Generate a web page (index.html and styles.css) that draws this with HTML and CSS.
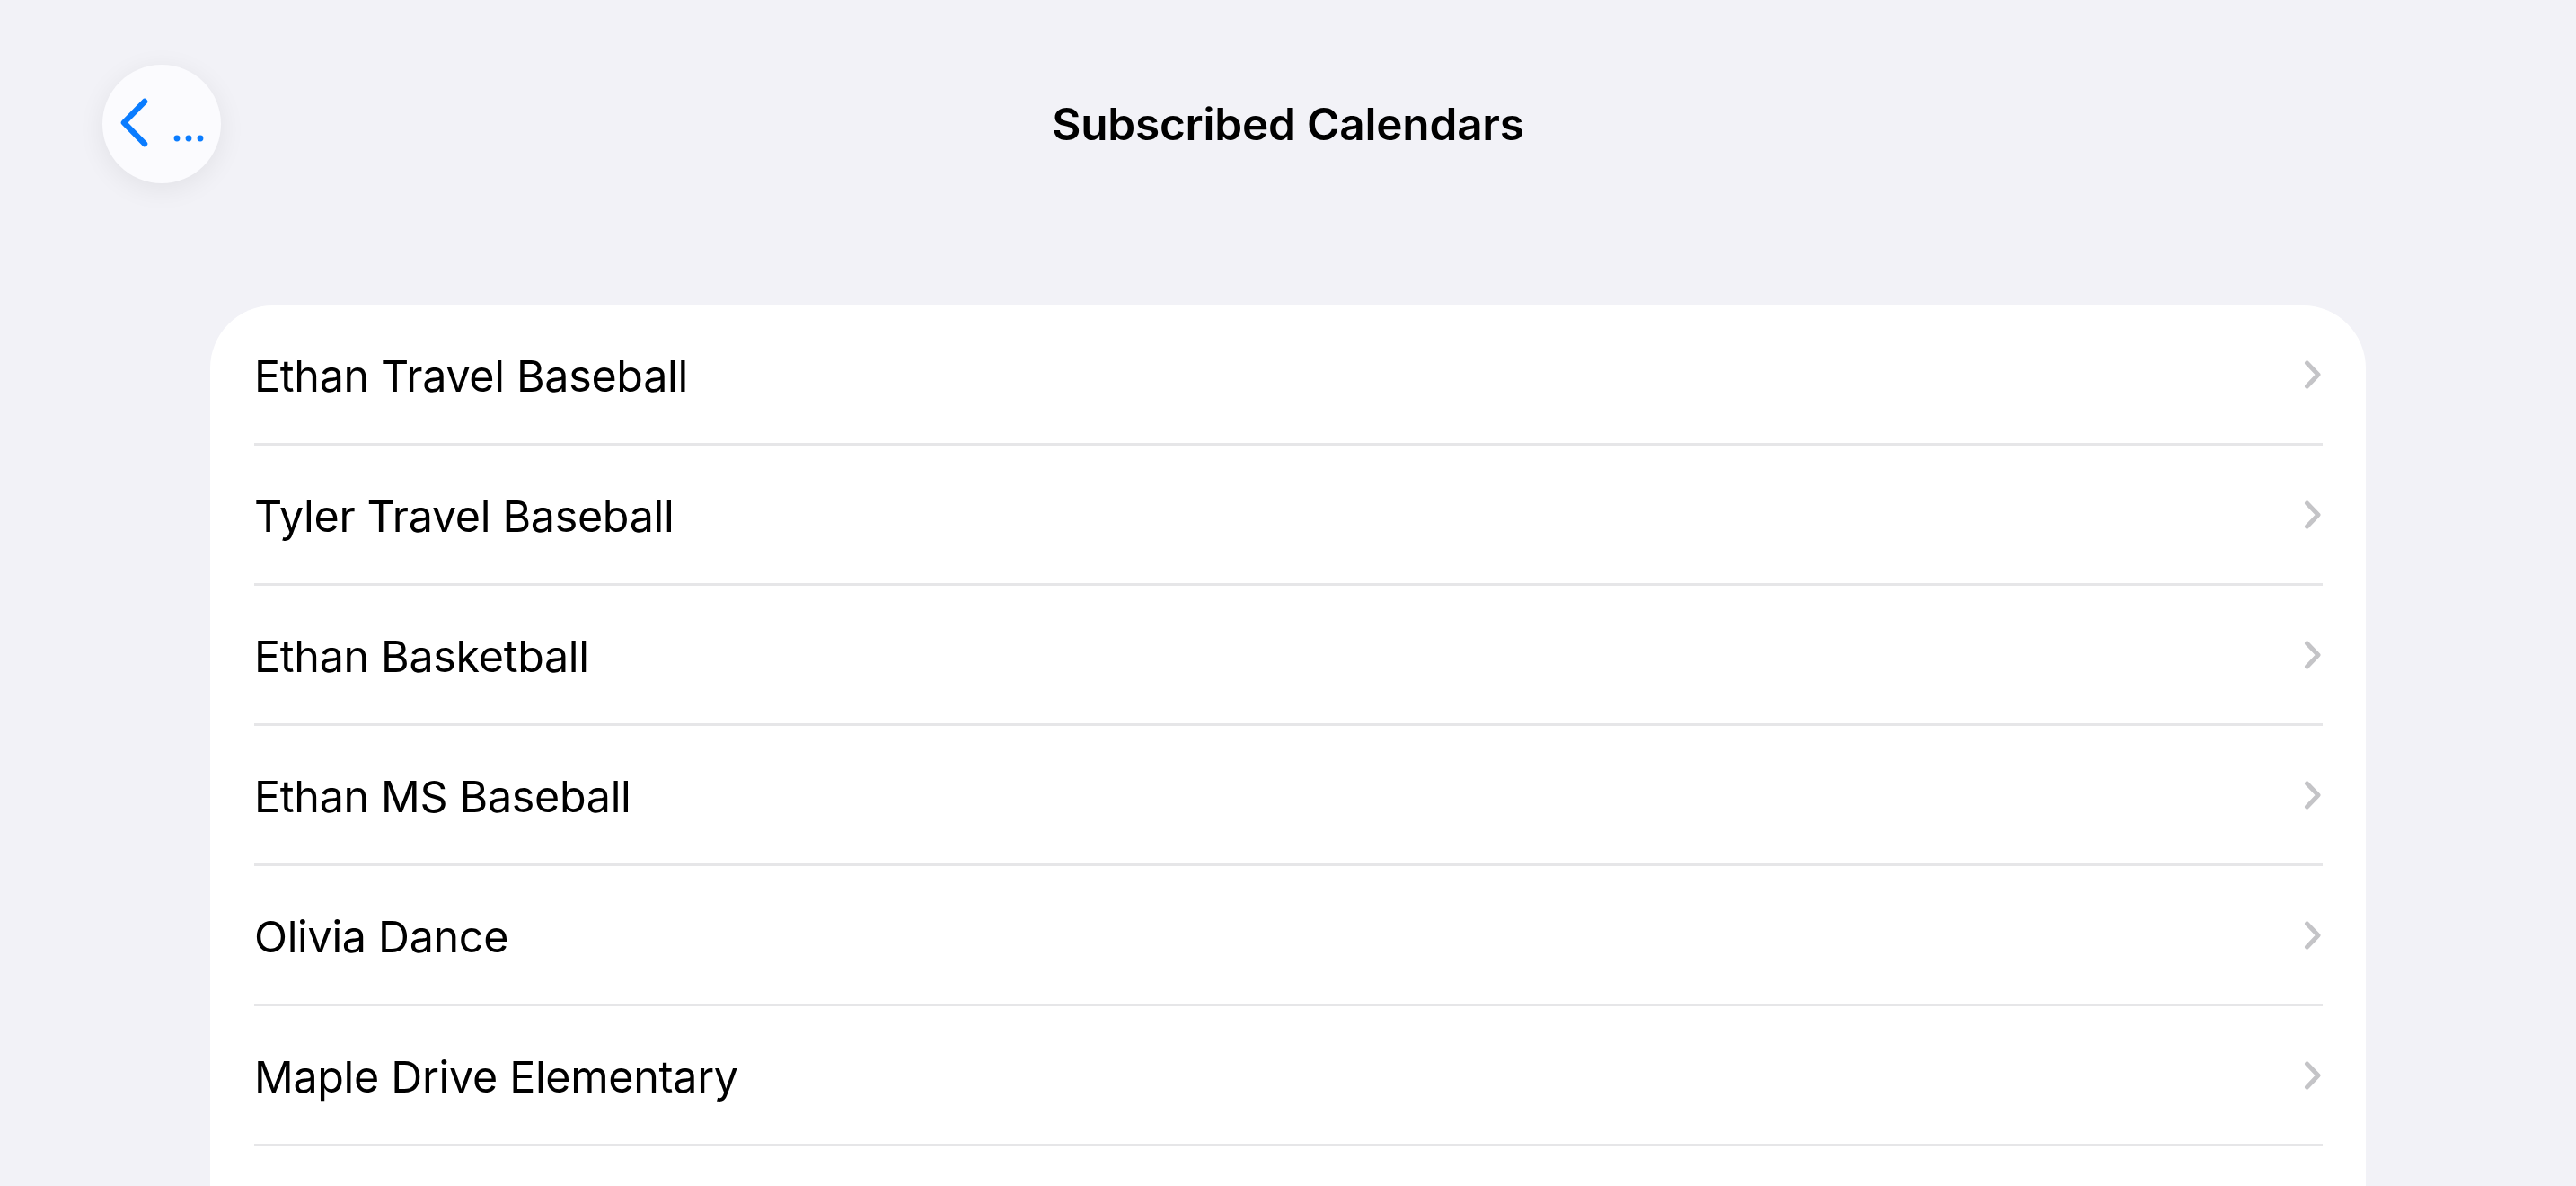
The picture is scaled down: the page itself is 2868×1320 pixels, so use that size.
FILE: index.html
```html
<!DOCTYPE html>
<html lang="en">
<head>
<meta charset="UTF-8">
<title>Subscribed Calendars</title>
<link rel="stylesheet" href="styles.css">
</head>
<body>
<div class="nav-bar">
  <button class="back-button" aria-label="Back">
    <svg class="back-chevron" width="34" height="58" viewBox="0 0 34 58">
      <path d="M28 4 L5 27.5 L28 51" />
    </svg>
    <svg class="back-dots" width="34" height="8" viewBox="0 0 34 8">
      <circle cx="4" cy="4" r="3.4" />
      <circle cx="17" cy="4" r="3.4" />
      <circle cx="30" cy="4" r="3.4" />
    </svg>
  </button>
  <h1 class="nav-title">Subscribed Calendars</h1>
  <div class="nav-spacer"></div>
</div>

<div class="list-card">
  <div class="list-row"><div class="row-inner"><span class="row-label">Ethan Travel Baseball</span><svg class="row-chevron" width="20" height="32" viewBox="0 0 20 32"><path d="M3.5 3 L16 16 L3.5 29" /></svg></div></div>
  <div class="list-row"><div class="row-inner"><span class="row-label">Tyler Travel Baseball</span><svg class="row-chevron" width="20" height="32" viewBox="0 0 20 32"><path d="M3.5 3 L16 16 L3.5 29" /></svg></div></div>
  <div class="list-row"><div class="row-inner"><span class="row-label">Ethan Basketball</span><svg class="row-chevron" width="20" height="32" viewBox="0 0 20 32"><path d="M3.5 3 L16 16 L3.5 29" /></svg></div></div>
  <div class="list-row"><div class="row-inner"><span class="row-label">Ethan MS Baseball</span><svg class="row-chevron" width="20" height="32" viewBox="0 0 20 32"><path d="M3.5 3 L16 16 L3.5 29" /></svg></div></div>
  <div class="list-row"><div class="row-inner"><span class="row-label">Olivia Dance</span><svg class="row-chevron" width="20" height="32" viewBox="0 0 20 32"><path d="M3.5 3 L16 16 L3.5 29" /></svg></div></div>
  <div class="list-row"><div class="row-inner"><span class="row-label">Maple Drive Elementary</span><svg class="row-chevron" width="20" height="32" viewBox="0 0 20 32"><path d="M3.5 3 L16 16 L3.5 29" /></svg></div></div>
</div>
</body>
</html>
```

FILE: styles.css
```css
:root {
  --bg-color: #f2f2f7;
  --card-color: #fff;
  --text-color: #000;
  --accent-color: #0a7cff;
  --separator-color: #e6e6e8;
  --chevron-color: #c4c4c7;
}

body {
  font-family: Inter, "Liberation Sans", Arial, sans-serif;
  background-color: var(--bg-color);
  color: var(--text-color);
  margin: 0;
  height: 100vh;
  overflow: hidden;
}

.nav-bar {
  display: grid;
  grid-template-columns: 1fr auto 1fr;
  align-items: center;
  padding: 72px 114px 0;
  height: 132px;
}
.back-button {
  width: 132px;
  height: 132px;
  border: none;
  border-radius: 50%;
  background-color: #fbfbfe;
  box-shadow: 0 6px 30px rgba(0, 0, 0, 0.07);
  display: flex;
  align-items: center;
  padding: 0 0 0 19px;
  gap: 26px;
}
.back-chevron path {
  fill: none;
  stroke: var(--accent-color);
  stroke-width: 6.5;
  stroke-linecap: round;
  stroke-linejoin: round;
}
.back-dots {
  margin-top: 32px;
}
.back-dots circle {
  fill: var(--accent-color);
}
.nav-title {
  margin: 0;
  font-size: 49.5px;
  font-weight: 600;
  letter-spacing: -0.2px;
}

.list-card {
  margin: 136px 234px 0;
  min-height: 1200px;
  background-color: var(--card-color);
  border-radius: 70px;
  overflow: hidden;
}
.list-row {
  padding: 0 48px 0 49px;
}
.row-inner {
  height: 153px;
  border-bottom: 3px solid var(--separator-color);
  display: flex;
  align-items: center;
  justify-content: space-between;
}
.row-label {
  font-size: 48.4px;
  letter-spacing: -0.3px;
  padding-top: 3px;
}
.row-chevron {
  margin-right: 1px;
}
.row-chevron path {
  fill: none;
  stroke: var(--chevron-color);
  stroke-width: 5;
  stroke-linecap: round;
  stroke-linejoin: round;
}
```
